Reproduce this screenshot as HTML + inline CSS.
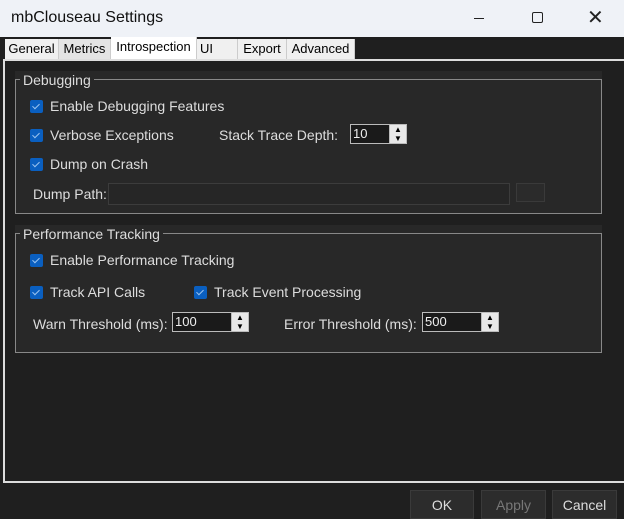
<!DOCTYPE html>
<html><head><style>
body{margin:0;width:624px;height:519px;background:#1f1f1f;position:relative;overflow:hidden;font-family:"Liberation Sans",sans-serif;font-size:14px;color:#ddd}
.a{position:absolute}
.title{left:0;top:0;width:624px;height:37px;background:#eff2f7;color:#111}
.tab{top:39px;height:20px;background:#f0f0f0;color:#000;font-size:13px;line-height:20px;text-align:center;border-right:1px solid #ccc;box-sizing:border-box}
.grp{background:#282828;border:1px solid #888}
.gbg{background:#282828}
.gt{background:#282828;padding:0 3px;color:#ddd}
.cb{width:13px;height:13px;background:#0a5fc0;border-radius:2px}
.cb::after{content:"";position:absolute;left:4px;top:2px;width:3px;height:6px;border:solid #9cc4f0;border-width:0 1.5px 1.5px 0;transform:rotate(45deg)}
.num{height:20px;background:#1a1a1a;border:1px solid #bbb;box-sizing:border-box;font-size:13px;line-height:18px;padding-left:2px;color:#eee}
.sp{width:18px;height:20px;background:#e8e8e8;border:1px solid #bbb;box-sizing:border-box;font-size:8px;line-height:9px;text-align:center;color:#000}
.btn{top:490px;height:29px;background:#2c2c2c;border:1px solid #3a3a3a;box-sizing:border-box;text-align:center;line-height:28px;font-size:14px}
</style></head><body>
<div class="a title"><div class="a" style="left:11px;top:9px;font-size:16px">mbClouseau Settings</div>
<div class="a" style="left:474px;top:18px;width:10px;height:1px;background:#222"></div>
<div class="a" style="left:532px;top:12px;width:9px;height:9px;border:1.5px solid #222;border-radius:2px"></div>
<div class="a" style="left:587px;top:5px;font-size:20px;color:#222">✕</div></div>
<div class="a tab" style="left:5px;width:54px">General</div>
<div class="a tab" style="left:59px;width:52px;background:#e4e4e4">Metrics</div>
<div class="a tab" style="left:111px;width:86px;top:37px;height:23px;background:#fff">Introspection</div>
<div class="a tab" style="left:197px;width:41px;text-align:left;padding-left:3px">UI</div>
<div class="a tab" style="left:238px;width:49px">Export</div>
<div class="a tab" style="left:287px;width:68px">Advanced</div>
<div class="a" style="left:3px;top:59px;width:630px;height:424px;border:2px solid #ddd;box-sizing:border-box;border-right:none"></div>
<div class="a" style="left:0;top:489px;width:624px;height:30px;background:#1f1f1f"></div>

<div class="a gbg" style="left:15px;top:71px;width:587px;height:10px"></div>
<div class="a grp" style="left:15px;top:79px;width:585px;height:133px"></div>
<div class="a gt" style="left:20px;top:72px">Debugging</div>
<div class="a cb" style="left:30px;top:100px"></div><div class="a" style="left:50px;top:98px">Enable Debugging Features</div>
<div class="a cb" style="left:30px;top:129px"></div><div class="a" style="left:50px;top:127px">Verbose Exceptions</div>
<div class="a" style="left:219px;top:127px">Stack Trace Depth:</div>
<div class="a num" style="left:350px;top:124px;width:42px">10</div><div class="a sp" style="left:389px;top:124px">▲<br>▼</div>
<div class="a cb" style="left:30px;top:158px"></div><div class="a" style="left:50px;top:156px">Dump on Crash</div>
<div class="a" style="left:33px;top:186px">Dump Path:</div>
<div class="a" style="left:108px;top:183px;width:400px;height:20px;background:#262626;border:1px solid #3c3c3c"></div>
<div class="a" style="left:516px;top:183px;width:27px;height:17px;background:#2b2b2b;border:1px solid #3a3a3a"></div>

<div class="a gbg" style="left:15px;top:225px;width:587px;height:10px"></div>
<div class="a grp" style="left:15px;top:233px;width:585px;height:118px"></div>
<div class="a gt" style="left:20px;top:226px">Performance Tracking</div>
<div class="a cb" style="left:30px;top:254px"></div><div class="a" style="left:50px;top:252px">Enable Performance Tracking</div>
<div class="a cb" style="left:30px;top:286px"></div><div class="a" style="left:50px;top:284px">Track API Calls</div>
<div class="a cb" style="left:194px;top:286px"></div><div class="a" style="left:214px;top:284px">Track Event Processing</div>
<div class="a" style="left:33px;top:316px">Warn Threshold (ms):</div>
<div class="a num" style="left:172px;top:312px;width:62px">100</div><div class="a sp" style="left:231px;top:312px">▲<br>▼</div>
<div class="a" style="left:284px;top:316px">Error Threshold (ms):</div>
<div class="a num" style="left:422px;top:312px;width:62px">500</div><div class="a sp" style="left:481px;top:312px">▲<br>▼</div>

<div class="a btn" style="left:410px;width:64px">OK</div>
<div class="a btn" style="left:481px;width:65px;color:#777">Apply</div>
<div class="a btn" style="left:552px;width:65px">Cancel</div>
</body></html>
